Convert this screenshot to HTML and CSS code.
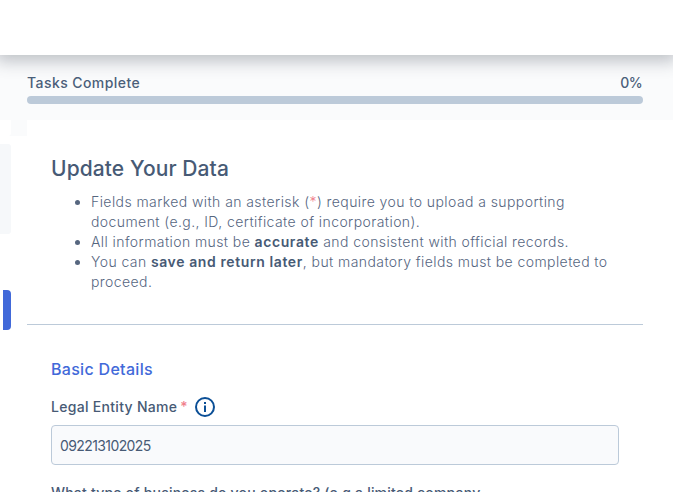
FILE: index.html
```html
<!DOCTYPE html>
<html lang="en">
<head>
<meta charset="utf-8">
<title>Update Your Data</title>
<link rel="stylesheet" href="styles.css">
</head>
<body>
<header class="topbar"></header>
<section class="progress">
  <div class="progress-head"><span class="tasks">Tasks Complete</span><span class="pct">0%</span></div>
  <div class="track"></div>
</section>
<div class="body">
  <aside class="rail">
    <div class="rail-top"><div class="rail-tab"></div></div>
    <div class="rail-panel"></div>
    <div class="rail-active"></div>
  </aside>
  <main class="card">
    <h1>Update Your Data</h1>
    <ul>
      <li>Fields marked with an asterisk (<span class="req">*</span>) require you to upload a supporting document (e.g., ID, certificate of incorporation).</li>
      <li>All information must be <b>accurate</b> and consistent with official records.</li>
      <li>You can <b>save and return later</b>, but mandatory fields must be completed to proceed.</li>
    </ul>
    <hr>
    <h2>Basic Details</h2>
    <div class="label">Legal Entity Name<span class="req">*</span>
      <svg class="info" width="22" height="22" viewBox="0 0 22 22" aria-hidden="true"><circle cx="11" cy="11" r="9" fill="none" stroke="#0b4f96" stroke-width="2"/><rect x="10" y="9.5" width="2" height="6.5" fill="#0b4f96"/><rect x="10" y="6" width="2" height="2" fill="#0b4f96"/></svg>
    </div>
    <input class="field" value="092213102025">
    <div class="label next">What type of business do you operate? (e.g a limited company</div>
  </main>
</div>
</body>
</html>
```
FILE: styles.css
```css
html, body { margin: 0; height: 492px; overflow: hidden; background: #fff; }
body { font-family: "Inter", "Open Sans", sans-serif; color: #475a75; }
.topbar { height: 55px; background: #fff; box-shadow: 0 2px 16px 4px rgba(60, 70, 85, .33); position: relative; }
.progress { background: #fafbfc; height: 65px; padding: 0 30px 0 27px; box-sizing: border-box; overflow: hidden; }
.progress-head { display: flex; justify-content: space-between; margin-top: 19px; font-size: 14px; line-height: 17px; font-weight: 500; color: #4b5f7a; }
.tasks { letter-spacing: .43px; }
.pct { letter-spacing: -.6px; margin-right: 1px; }
.track { height: 8px; border-radius: 4px; background: #bccad9; margin-top: 5px; }
.body { display: flex; }
.rail { width: 11px; margin-right: 16px; display: flex; flex-direction: column; }
.rail-top { width: 27px; height: 16px; background: #fafbfc; }
.rail-tab { width: 11px; height: 16px; background: #fff; border-radius: 0 0 3px 0; }
.rail-panel { height: 90px; margin-top: 8px; background: #f6f8fa; border-radius: 0 3px 3px 0; }
.rail-active { height: 40px; width: 8px; margin: 56px 0 0 3px; background: #4169d9; border-radius: 0 4px 4px 0; }
.card { width: 616px; padding: 36px 0 0; background: #fff; border-radius: 3px 0 0 0; position: relative; }
h1 { margin: 0 24px 10px; font-size: 21px; line-height: 26px; font-weight: 500; letter-spacing: .1px; color: #475a75; }
ul { margin: 0 24px; padding: 0 0 0 40px; font-size: 14px; line-height: 20px; color: #56667f; font-weight: 300; letter-spacing: .42px; }
b { font-weight: 600; color: #475a75; letter-spacing: .6px; }
.req { color: #f0808c; }
hr { border: 0; border-top: 1px solid #bccad9; margin: 32px 0 0; }
h2 { margin: 34px 24px 0; font-size: 16px; line-height: 20px; font-weight: 500; letter-spacing: .3px; color: #4169d9; }
.label { margin: 17px 24px 0; display: flex; align-items: center; font-size: 14px; line-height: 22px; font-weight: 500; letter-spacing: .3px; color: #475a75; }
.label .req { margin-left: 3px; align-self: flex-start; }
.info { margin-left: 6px; }
.field { display: block; width: 568px; height: 40px; margin: 7px 24px 0; box-sizing: border-box; padding: 0 8px; background: #f9fafc; border: 1px solid #bccad9; border-radius: 4px; font: 400 14px/20px "Inter", sans-serif; letter-spacing: -.6px; color: #475a75; }
.next { margin-top: 17px; white-space: nowrap; letter-spacing: .2px; }
```
